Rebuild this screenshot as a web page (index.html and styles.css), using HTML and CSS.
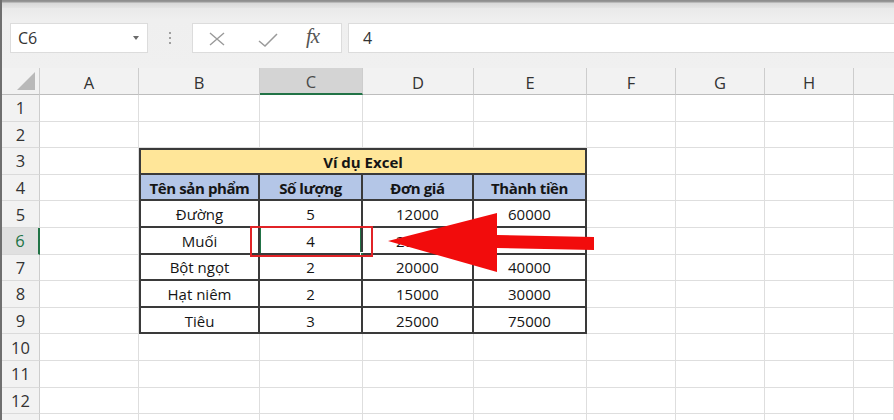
FILE: index.html
```html
<!DOCTYPE html>
<html lang="vi">
<head>
<meta charset="utf-8">
<link rel="stylesheet" href="styles.css">
</head>
<body>
<div class="app">
  <div class="topstrip"></div>
  <div class="formula-row">
    <div class="namebox"><span>C6</span><span class="caret"></span></div>
    <div class="grip"><i></i><i></i><i></i></div>
    <div class="fx-tools">
      <svg class="ic-x" width="18" height="14" viewBox="0 0 18 14"><path d="M2 1 L16 13 M16 1 L2 13" stroke="#9a9a9a" stroke-width="1.4" fill="none"/></svg>
      <svg class="ic-ok" width="20" height="14" viewBox="0 0 20 14"><path d="M1 8 L7 13 L19 1" stroke="#9a9a9a" stroke-width="1.5" fill="none"/></svg>
      <span class="fx">fx</span>
    </div>
    <div class="formula-input">4</div>
  </div>
  <div class="sheet">
    <div class="ch corner"><svg width="20" height="20" viewBox="0 0 20 20"><polygon points="19,1 19,19 1,19" fill="#b9b9b9"/></svg></div>
    <div class="ch">A</div><div class="ch">B</div><div class="ch sel">C</div><div class="ch">D</div><div class="ch">E</div><div class="ch">F</div><div class="ch">G</div><div class="ch">H</div><div class="ch last"></div>

    <div class="rh">1</div><div class="c"></div><div class="c"></div><div class="c"></div><div class="c"></div><div class="c"></div><div class="c"></div><div class="c"></div><div class="c"></div><div class="c"></div>
    <div class="rh">2</div><div class="c"></div><div class="c"></div><div class="c"></div><div class="c"></div><div class="c"></div><div class="c"></div><div class="c"></div><div class="c"></div><div class="c"></div>
    <div class="rh">3</div><div class="c"></div><div class="c t title tl tr">Ví dụ Excel</div><div class="c"></div><div class="c"></div><div class="c"></div><div class="c"></div>
    <div class="rh">4</div><div class="c"></div><div class="c t hd tl">Tên sản phẩm</div><div class="c t hd">Số lượng</div><div class="c t hd">Đơn giá</div><div class="c t hd">Thành tiền</div><div class="c"></div><div class="c"></div><div class="c"></div><div class="c"></div>
    <div class="rh">5</div><div class="c"></div><div class="c t tl">Đường</div><div class="c t">5</div><div class="c t">12000</div><div class="c t">60000</div><div class="c"></div><div class="c"></div><div class="c"></div><div class="c"></div>
    <div class="rh sel">6</div><div class="c"></div><div class="c t tl">Muối</div><div class="c t active">4<span class="handle"></span></div><div class="c t">20000</div><div class="c t">80000</div><div class="c"></div><div class="c"></div><div class="c"></div><div class="c"></div>
    <div class="rh">7</div><div class="c"></div><div class="c t tl">Bột ngọt</div><div class="c t">2</div><div class="c t">20000</div><div class="c t">40000</div><div class="c"></div><div class="c"></div><div class="c"></div><div class="c"></div>
    <div class="rh">8</div><div class="c"></div><div class="c t tl">Hạt niêm</div><div class="c t">2</div><div class="c t">15000</div><div class="c t">30000</div><div class="c"></div><div class="c"></div><div class="c"></div><div class="c"></div>
    <div class="rh">9</div><div class="c"></div><div class="c t tl">Tiêu</div><div class="c t">3</div><div class="c t">25000</div><div class="c t">75000</div><div class="c"></div><div class="c"></div><div class="c"></div><div class="c"></div>
    <div class="rh">10</div><div class="c"></div><div class="c"></div><div class="c"></div><div class="c"></div><div class="c"></div><div class="c"></div><div class="c"></div><div class="c"></div><div class="c"></div>
    <div class="rh">11</div><div class="c"></div><div class="c"></div><div class="c"></div><div class="c"></div><div class="c"></div><div class="c"></div><div class="c"></div><div class="c"></div><div class="c"></div>
    <div class="rh">12</div><div class="c"></div><div class="c"></div><div class="c"></div><div class="c"></div><div class="c"></div><div class="c"></div><div class="c"></div><div class="c"></div><div class="c"></div>
    <div class="rh"></div><div class="c"></div><div class="c"></div><div class="c"></div><div class="c"></div><div class="c"></div><div class="c"></div><div class="c"></div><div class="c"></div><div class="c"></div>
  </div>
  <div class="redbox"></div>
  <svg class="arrow" width="894" height="420" viewBox="0 0 894 420"><polygon points="388,241 497,213 497,235 594,237 594,250 497,248 497,272" fill="#f20c0c"/></svg>
</div>
</body>
</html>
```
FILE: styles.css
```css
* { box-sizing: border-box; }
html, body { margin: 0; padding: 0; }
body {
  width: 894px;
  height: 420px;
  overflow: hidden;
  background: #ffffff;
  font-family: "Open Sans", "Noto Sans", sans-serif;
}
.app {
  position: relative;
  width: 894px;
  height: 420px;
  border-left: 2px solid #6f6f6f;
  background: #f0f0f0;
}
.topstrip {
  height: 8px;
  background: linear-gradient(#8a8a8a 0, #9a9a9a 2px, #d8d8d8 3px, #e4e4e4 8px);
}
.formula-row {
  height: 60px;
  display: flex;
  align-items: flex-start;
  padding: 15px 0 0 8px;
  background: linear-gradient(#e9e9e9 0, #efefef 12px, #f0f0f0 100%);
}
.namebox {
  width: 138px;
  height: 30px;
  background: #fff;
  border: 1px solid #dcdcdc;
  display: flex;
  align-items: center;
  justify-content: space-between;
  padding: 0 8px 0 7px;
  font-size: 16px;
  color: #333;
}
.caret {
  width: 0;
  height: 0;
  border-left: 3.5px solid transparent;
  border-right: 3.5px solid transparent;
  border-top: 4px solid #6a6a6a;
}
.grip {
  width: 44px;
  height: 30px;
  display: flex;
  flex-direction: column;
  align-items: center;
  justify-content: center;
  gap: 3px;
}
.grip i {
  display: block;
  width: 2px;
  height: 2px;
  background: #a0a0a0;
}
.fx-tools {
  width: 150px;
  height: 30px;
  background: #fff;
  border: 1px solid #dcdcdc;
  display: flex;
  align-items: center;
  padding-left: 15px;
}
.ic-x { margin-top: 1px; }
.ic-ok { margin-left: 32px; margin-top: 3px; }
.fx {
  margin-left: 28px;
  font-family: "Liberation Serif", serif;
  font-style: italic;
  font-size: 21px;
  color: #555;
  letter-spacing: -1px;
  margin-top: -4px;
}
.formula-input {
  flex: 1;
  height: 30px;
  margin-left: 6px;
  background: #fff;
  border: 1px solid #dcdcdc;
  border-right: none;
  padding-left: 14px;
  font-size: 16px;
  line-height: 28px;
  color: #333;
}
.sheet {
  display: grid;
  grid-template-columns: 38px 99px 121px 103px 111px 113px 89px 89px 89px 40px;
  grid-template-rows: 27px repeat(13, 26.6px);
  background: #fff;
}
.ch {
  background: #f2f2f2;
  border-right: 1px solid #cdcdcd;
  border-bottom: 1px solid #bdbdbd;
  display: flex;
  align-items: center;
  justify-content: center;
  font-size: 16.5px;
  color: #333;
  padding-top: 2px;
}
.ch.last { border-right: none; }
.ch.corner {
  justify-content: flex-end;
  align-items: flex-end;
  padding: 0 3px 3px 0;
}
.ch.sel {
  background: #d4d4d4;
  border-bottom: 2px solid #217346;
  color: #4a4a4a;
}
.rh {
  background: #f2f2f2;
  border-right: 1px solid #cdcdcd;
  border-bottom: 1px solid #dadada;
  display: flex;
  align-items: center;
  justify-content: center;
  font-size: 16.5px;
  color: #333;
}
.rh.sel {
  background: #e0e0e0;
  border-right: 2px solid #217346;
  color: #217346;
}
.c {
  border-right: 1px solid #dedede;
  border-bottom: 1px solid #dedede;
  display: flex;
  align-items: center;
  justify-content: center;
  font-size: 15px;
  color: #151515;
  position: relative;
}
.c.t {
  border-right: 2px solid #3a3a3a;
  border-bottom: 2px solid #3a3a3a;
  padding-top: 1px;
}
.c.tl { border-left: 2px solid #3a3a3a; }
.c.title {
  grid-column: span 4;
  background: #ffe699;
  border-top: 2px solid #3a3a3a;
  font-weight: 700;
}
.c.hd {
  background: #b4c6e7;
  font-weight: 700;
  letter-spacing: -0.4px;
  white-space: nowrap;
}
.c.active {
  box-shadow: inset 1px 0 0 #217346, inset -1px 0 0 #217346;
}
.handle {
  position: absolute;
  right: -4px;
  bottom: -4px;
  width: 5px;
  height: 5px;
  background: #217346;
  border: 1px solid #fff;
}
.redbox {
  position: absolute;
  left: 248px;
  top: 226px;
  width: 123px;
  height: 31px;
  border: 2.5px solid #e12327;
}
.arrow {
  position: absolute;
  left: -2px;
  top: 0;
}
```
